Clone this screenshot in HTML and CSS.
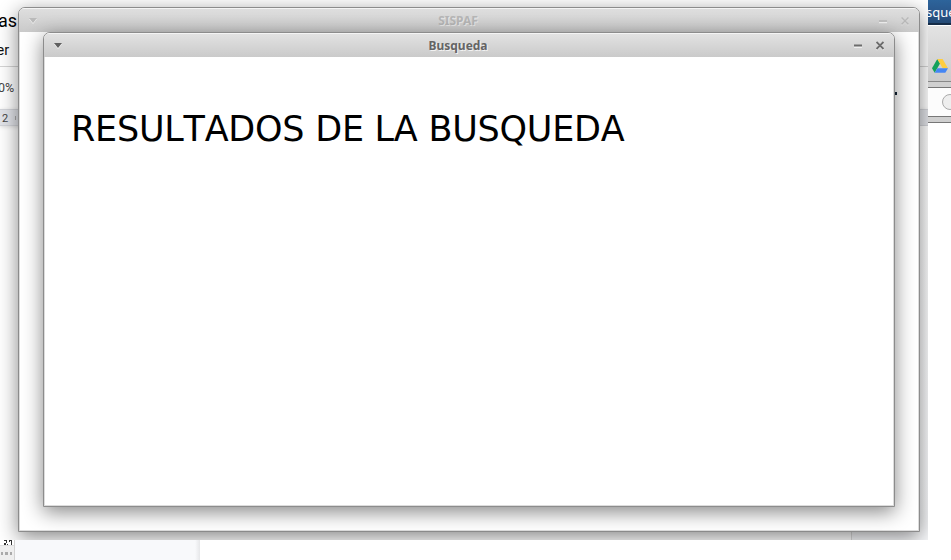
FILE: index.html
```html
<!DOCTYPE html>
<html lang="es">
<head>
<meta charset="utf-8">
<title>Busqueda</title>
<link rel="stylesheet" href="styles.css">
</head>
<body>
<div class="desktop">
  <aside class="browser">
    <div class="browser-title"><span>sque</span></div>
    <div class="browser-tabs">
      <svg width="16" height="14" viewBox="0 0 16 14"><path fill="#12a15c" d="M5.300 0 0 9.200 2.700 13.800 8 4.600Z"/><path fill="#ffcd40" d="M5.300 0h5.300L16 9.200h-5.300Z"/><path fill="#4486f4" d="M5.400 9.200H16l-2.700 4.600H2.700Z"/></svg>
    </div>
    <div class="browser-bar"><i class="knob"></i></div>
    <div class="browser-edge"></div>
  </aside>
  <footer class="sheet">
    <div class="corner"><svg width="14" height="20" viewBox="0 0 14 20"><path fill="#333" d="M4 0h3v1H4zM9 0h3v1H9zM6 1h1v2H6zM11 1h1v4h-1zM4 3h2v2H4zM7 4h1v1H7zM9 1h1v1H9z"/><path fill="#dedede" d="M0 5h14v1H0z"/><path fill="#eee" d="M0 6h14v14H0z"/><path fill="#aaa" d="M1 12h2v3H1zM5 12h3v3H5zM10 12h2v3h-2z"/></svg></div>
    <div class="margin"></div>
  </footer>
  <main class="capture">
    <div class="doc">
      <div class="row title-row">as</div>
      <div class="row menu-row">er</div>
      <div class="row zoom-row">0%</div>
      <div class="row ruler-row">2 <i></i></div>
      <div class="page-edge"></div>
    </div>
    <section class="window back">
      <header class="bar">
        <svg class="arrow" width="10" height="6" viewBox="0 0 10 6"><path fill="#f0f0f0" d="M1 1h8L5 6Z"/><path fill="#bababa" d="M1 0h8L5 5Z"/></svg>
        <span class="name">SISPAF</span>
        <svg class="controls" width="34" height="12" viewBox="0 0 34 12"><path stroke="#f0f0f0" stroke-width="1.500" d="M3 7.500h8M25.500 3l7 7m0-7-7 7"/><path stroke="#b8b8b8" stroke-width="1.700" d="M3 6h8M25.500 2.500l7 7m0-7-7 7"/></svg>
      </header>
      <div class="content"></div>
    </section>
    <i class="dot"></i>
    <section class="window front">
      <header class="bar">
        <svg class="arrow" width="10" height="6" viewBox="0 0 10 6"><path fill="#f6f6f6" d="M1 1h8L5 6Z"/><path fill="#606060" d="M1 0h8L5 5Z"/></svg>
        <span class="name">Busqueda</span>
        <svg class="controls" width="34" height="12" viewBox="0 0 34 12"><path stroke="#f6f6f6" stroke-width="1.500" d="M3 7h8M25.500 3l7 7m0-7-7 7"/><path stroke="#6c6c6c" stroke-width="1.800" d="M3 5.500h8M25.500 2l7 7m0-7-7 7"/></svg>
      </header>
      <div class="content"><h1>RESULTADOS DE LA BUSQUEDA</h1></div>
    </section>
  </main>
</div>
</body>
</html>
```
FILE: styles.css
```css
* { box-sizing: border-box; }
body { margin: 0; background: #fff; }
svg { display: block; }
.desktop { position: relative; width: 951px; height: 560px; overflow: hidden; background: #fff; }
.browser { position: absolute; left: 928px; top: 0; width: 23px; overflow: hidden; }
.browser-title { height: 26px; background: linear-gradient(#2d649b, #2a568a 50%, #244a75 88%, #152c47 89%, #152c47 96%, #fff 97%); font: 13px/25px "Noto Sans", sans-serif; color: #fff; }
.browser-title span { display: block; margin-left: -2px; }
.browser-tabs { height: 62px; padding: 33px 0 0 4px; background: linear-gradient(#e3e3e3, #cbcbcb 55px, #888 55px, #888 56px, #d0d0d0 56px, #d0d0d0 61px, #777 61px); }
.browser-bar { height: 29px; padding: 6px 0 0 14px; background: #fcfcfc; border-bottom: 1px solid #777; }
.knob { display: block; width: 16px; height: 16px; border: 1px solid #aaa; border-radius: 50%; background: #eee; }
.browser-edge { height: 6px; background: #cfcfcf; border-bottom: 1px solid #777; }
.sheet { position: absolute; left: 0; top: 540px; width: 200px; height: 20px; display: flex; }
.corner { width: 15px; border-right: 1px solid #d2d2d2; background: #fff; }
.margin { flex: 1; background: linear-gradient(90deg, #f8f9fb 180px, #e6e7e9); }
.capture { position: absolute; left: 0; top: 0; width: 928px; height: 540px; overflow: hidden; background: #fff; }
.doc { color: #111; font-family: Roboto, sans-serif; height: 540px; display: flex; flex-direction: column; }
.row { flex: none; }
.title-row { height: 34px; font-size: 18px; line-height: 41px; color: #000; margin-left: -2px; }
.menu-row { height: 33px; font-size: 14.5px; line-height: 34px; margin-left: -3.5px; border-bottom: 1px solid #d5d5d5; }
.zoom-row { height: 42px; font-size: 12.5px; line-height: 42px; color: #444; margin-left: -2px; }
.ruler-row { height: 17px; display: flex; align-items: center; gap: 7px; padding: 1px 0 0 2px; font-size: 11px; color: #444; background: #e2e4e9; border-top: 1px solid #d3d5da; border-bottom: 1px solid #d3d5da; box-shadow: 0 1px 4px #ddd; }
.ruler-row i { width: 1px; height: 4px; background: #aaa; }
.page-edge { flex: 1; margin-left: 851px; border-left: 1px solid #ddd; background: linear-gradient(#fff, #f8f9fb 400px); }
.window { position: absolute; border: 1px solid #8c8c8c; border-radius: 7px 7px 0 0; background: #fff; box-shadow: 0 5px 20px rgba(0,0,0,.48); overflow: hidden; }
.back { left: 18px; top: 7px; width: 902px; height: 525px; }
.front { left: 43px; top: 32px; width: 852px; height: 475px; }
.bar { height: 24px; display: flex; align-items: center; padding: 0 9px; border-top: 1px solid #f4f4f4; background: linear-gradient(#e2e2e2, #cacaca); }
.back .bar { background: linear-gradient(#dedede, #cacaca); }
.name { flex: 1; text-align: center; padding-left: 2px; font: bold 12px/22px "Noto Sans", sans-serif; color: #646464; text-shadow: 1px 1px 0 #f2f2f2; }
.back .name { color: #b6b6b6; text-shadow: 1px 1px 0 #e8e8e8; }
.content { height: calc(100% - 24px); border: solid #dcdcdc; border-width: 0 1px 1px; background: #fff; }
h1 { margin: 0; padding: 51px 0 0 26px; font: 35px/42px "DejaVu Sans", sans-serif; font-kerning: none; letter-spacing: -.25px; color: #000; white-space: nowrap; }
.dot { position: absolute; left: 895px; top: 92px; width: 2px; height: 3px; background: #123; }
```
